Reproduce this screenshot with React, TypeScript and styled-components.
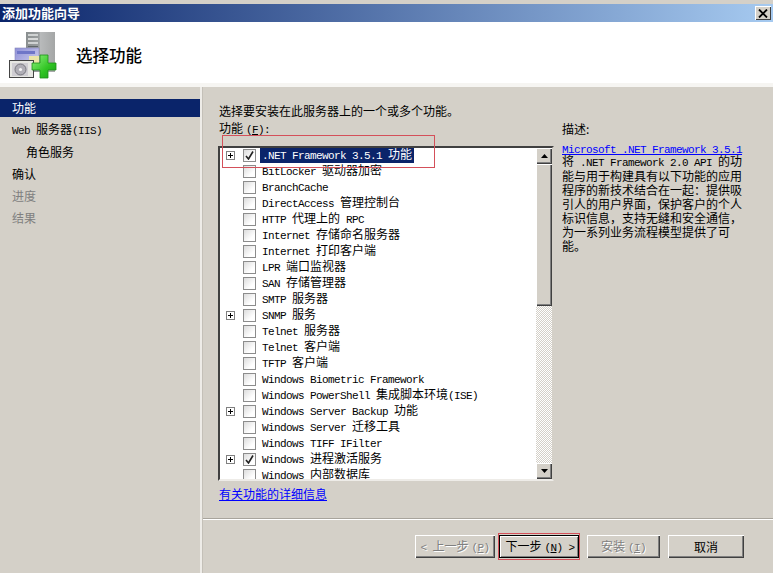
import React from "react";
import styled, { createGlobalStyle } from "styled-components";

const Global = createGlobalStyle`
  html, body { margin: 0; padding: 0; background: #d4d0c8; }
  * { box-sizing: border-box; }
`;

const Window = styled.div`
  width: 773px; height: 573px; overflow: hidden; position: relative;
  background: #d4d0c8; padding-top: 4px; display: flex; flex-direction: column;
  font-family: "Noto Sans CJK SC", "Liberation Sans", sans-serif; font-size: 12px; color: #000;
  line-height: 14px;
`;
const TitleBar = styled.div`
  height: 18px; flex: none; display: flex; align-items: center; justify-content: space-between;
  padding: 0 2px; background: linear-gradient(90deg, #0a246a, #a6caf0);
  color: #fff; font-weight: 700; font-size: 13px;
`;
const CloseBtn = styled.div`
  width: 16px; height: 14px; background: #d4d0c8; display: flex; align-items: center; justify-content: center;
  box-shadow: inset 1px 1px 0 #fff, inset -1px -1px 0 #404040;
`;
const Header = styled.div`
  height: 65px; flex: none; background: #fff; border-bottom: 4px solid #f6f5f2;
  display: flex; align-items: center; padding: 2px 0 0 9px; gap: 19px;
`;
const HeaderTitle = styled.div`
  font-size: 16.5px; font-weight: 500; line-height: 20px; padding-top: 3px;
`;
const Body = styled.div`
  flex: 1; display: flex; min-height: 0;
`;
const Sidebar = styled.div`
  width: 200px; flex: none; padding-top: 12px; display: flex; flex-direction: column;
`;
const NavItem = styled.div<{ $state?: "active" | "muted"; $indent?: boolean }>`
  height: ${(p) => (p.$state === "active" ? 18 : 22)}px;
  margin-bottom: ${(p) => (p.$state === "active" ? 2 : 0)}px;
  display: flex; align-items: center; white-space: pre;
  padding-left: ${(p) => (p.$indent ? 26 : 12)}px;
  background: ${(p) => (p.$state === "active" ? "#0a246a" : "transparent")};
  color: ${(p) => (p.$state === "active" ? "#fff" : p.$state === "muted" ? "#808080" : "#000")};
`;
const Splitter = styled.div`
  width: 3px; flex: none; background: #eeece8; border-right: 1px solid #c4c0b8;
`;
const Main = styled.div`
  flex: 1; display: flex; flex-direction: column; min-width: 0;
`;
const Content = styled.div`
  height: 432px; flex: none; display: flex; padding: 15px 0 0 15px; gap: 8px;
`;
const LeftCol = styled.div`
  width: 336px; flex: none; display: flex; flex-direction: column;
`;
const Label = styled.div`
  height: 18px; white-space: pre; display: flex; align-items: center; padding-left: 1px;
`;
const ListBox = styled.div`
  width: 336px; height: 335px; flex: none; display: flex; background: #fff; overflow: hidden; margin-top: 8px;
  border: 2px solid; border-color: #404040 #d4d0c8 #eeece8 #404040;
`;
const Rows = styled.div`
  flex: 1; overflow: hidden; margin-top: -1px;
`;
const Row = styled.div`
  height: 16px; display: flex; align-items: center; padding-left: 6px; white-space: pre;
`;
const Expander = styled.div<{ $show: boolean }>`
  width: 9px; height: 9px; flex: none; position: relative; visibility: ${(p) => (p.$show ? "visible" : "hidden")};
  border: 1px solid #808080; background: #fff; margin-right: 8px;
  &::before { content: ""; position: absolute; left: 1px; top: 3px; width: 5px; height: 1px; background: #000; }
  &::after { content: ""; position: absolute; left: 3px; top: 1px; width: 1px; height: 5px; background: #000; }
`;
const Check = styled.div`
  width: 13px; height: 13px; flex: none; border: 1px solid #8c8c8c; display: flex; align-items: center; justify-content: center;
  background: linear-gradient(135deg, #dcdcdc, #fff 70%); margin-right: 4px;
`;
const RowText = styled.div<{ $sel?: boolean }>`
  height: 16px; padding: 0 2px; display: flex; align-items: center;
  background: ${(p) => (p.$sel ? "#0a246a" : "transparent")};
  color: ${(p) => (p.$sel ? "#fff" : "#000")};
`;
const Scrollbar = styled.div`
  width: 16px; flex: none; display: flex; flex-direction: column;
  background: repeating-conic-gradient(#d4d0c8 0 25%, #fff 0 50%) 0 0 / 2px 2px;
`;
const ScrollBtn = styled.div`
  height: 16px; flex: none; background: #d4d0c8; display: flex; align-items: center; justify-content: center;
  box-shadow: inset 1px 1px 0 #fff, inset -1px -1px 0 #404040, inset -2px -2px 0 #808080;
`;
const Thumb = styled.div`
  height: 142px; flex: none; background: #d4d0c8;
  box-shadow: inset 1px 1px 0 #fff, inset -1px -1px 0 #404040, inset -2px -2px 0 #808080;
`;
const Spacer = styled.div`
  flex: 1;
`;
const InfoLink = styled.a`
  margin-top: 6px; padding-left: 1px; color: #0000ff; text-decoration: underline; line-height: 14px; white-space: pre; width: fit-content;
`;
const Desc = styled.div`
  width: 190px; flex: none; padding-top: 18px; display: flex; flex-direction: column;
`;
const DescLabel = styled.div`
  height: 18px; white-space: pre; display: flex; align-items: center;
`;
const DescLink = styled.a`
  margin-top: 3px; height: 14px; line-height: 14px; color: #0000ff; text-decoration: underline; white-space: pre; width: fit-content;
`;
const DescLine = styled.div`
  height: 14px; display: flex; align-items: center; white-space: pre;
`;
const Footer = styled.div`
  flex: 1; border-top: 1px solid #fff; box-shadow: 0 -1px 0 #a8a49c;
  display: flex; align-items: flex-start; padding: 15px 0 0 212px;
`;
const Btn = styled.div<{ $w: number; $disabled?: boolean; $default?: boolean; $gap?: number }>`
  width: ${(p) => p.$w}px; height: 23px; flex: none; background: #d4d0c8; display: flex; align-items: center; justify-content: center;
  white-space: pre; margin-right: ${(p) => p.$gap ?? 0}px; padding-left: ${(p) => (p.$default ? 2 : 0)}px;
  color: ${(p) => (p.$disabled ? "#808080" : "#000")};
  text-shadow: ${(p) => (p.$disabled ? "1px 1px 0 #fff" : "none")};
  box-shadow: ${(p) =>
    p.$default
      ? "inset 0 0 0 1px #000, inset 2px 2px 0 #fff, inset -2px -2px 0 #808080"
      : "inset 1px 1px 0 #fff, inset -1px -1px 0 #404040, inset -2px -2px 0 #808080"};
`;
const Lat = styled.span`
  font-family: "Liberation Mono", monospace; font-size: 11px; letter-spacing: -0.6px;
`;
const MnemonicWrap = styled.span`
  margin-left: 3px;
`;
const Under = styled.span`
  text-decoration: underline;
`;
const Annotation = styled.div<{ $x: number; $y: number; $w: number; $h: number }>`
  position: absolute; left: ${(p) => p.$x}px; top: ${(p) => p.$y}px; width: ${(p) => p.$w}px; height: ${(p) => p.$h}px;
  border: 1px solid #d4505a; pointer-events: none;
`;

// Splits a string into Latin (6px per char) and CJK (12px) runs, as the bitmap UI font does.
const T = ({ s }: { s: string }) => (
  <span>
    {s.split(/([\x20-\x7e]+)/).filter(Boolean).map((r, i) =>
      /^[\x20-\x7e]/.test(r) ? <Lat key={i}>{r}</Lat> : <span key={i}>{r}</span>
    )}
  </span>
);

const Mnemonic = ({ k }: { k: string }) => (
  <MnemonicWrap>
    <Lat>(<Under>{k}</Under>)</Lat>
  </MnemonicWrap>
);

const items: { t: string; plus?: boolean; checked?: boolean; sel?: boolean }[] = [
  { t: ".NET Framework 3.5.1 功能", plus: true, checked: true, sel: true },
  { t: "BitLocker 驱动器加密" },
  { t: "BranchCache" },
  { t: "DirectAccess 管理控制台" },
  { t: "HTTP 代理上的 RPC" },
  { t: "Internet 存储命名服务器" },
  { t: "Internet 打印客户端" },
  { t: "LPR 端口监视器" },
  { t: "SAN 存储管理器" },
  { t: "SMTP 服务器" },
  { t: "SNMP 服务", plus: true },
  { t: "Telnet 服务器" },
  { t: "Telnet 客户端" },
  { t: "TFTP 客户端" },
  { t: "Windows Biometric Framework" },
  { t: "Windows PowerShell 集成脚本环境(ISE)" },
  { t: "Windows Server Backup 功能", plus: true },
  { t: "Windows Server 迁移工具" },
  { t: "Windows TIFF IFilter" },
  { t: "Windows 进程激活服务", plus: true, checked: true },
  { t: "Windows 内部数据库" },
];

const descLines = [
  "将 .NET Framework 2.0 API 的功",
  "能与用于构建具有以下功能的应用",
  "程序的新技术结合在一起：提供吸",
  "引人的用户界面，保护客户的个人",
  "标识信息，支持无缝和安全通信，",
  "为一系列业务流程模型提供了可",
  "能。",
];

const WizardIcon = () => (
  <svg width="48" height="50" viewBox="0 0 48 50" style={{ flex: "none" }}>
    <defs>
      <linearGradient id="srv" x1="0" x2="1" y1="0" y2="0">
        <stop offset="0" stopColor="#8a8f90" />
        <stop offset="0.45" stopColor="#9a9e9f" />
        <stop offset="0.5" stopColor="#b8babb" />
        <stop offset="1" stopColor="#a4a6a6" />
      </linearGradient>
      <linearGradient id="plus" x1="0" x2="1" y1="0" y2="1">
        <stop offset="0" stopColor="#8ef07c" />
        <stop offset="0.6" stopColor="#2fc422" />
        <stop offset="1" stopColor="#1a9a1c" />
      </linearGradient>
      <linearGradient id="win" x1="0" x2="1" y1="0" y2="1">
        <stop offset="0" stopColor="#8f90d8" />
        <stop offset="1" stopColor="#d8d8f0" />
      </linearGradient>
    </defs>
    <rect x="17" y="3" width="29" height="40" fill="url(#srv)" />
    <rect x="19" y="5" width="10" height="2" fill="#cfd2d2" />
    <rect x="19" y="9" width="10" height="2" fill="#d6d8d8" />
    <rect x="19" y="13" width="10" height="2" fill="#cfd2d2" />
    <rect x="19" y="17" width="10" height="1" fill="#5f6668" />
    <rect x="6" y="19" width="24" height="22" fill="url(#win)" stroke="#8686b8" strokeWidth="0.6" />
    <rect x="8" y="22" width="18" height="3" fill="#6f76c8" />
    <rect x="20" y="27" width="10" height="14" fill="#ece6a8" />
    <rect x="0.5" y="31.5" width="24" height="17" fill="#e6e6e2" stroke="#444" />
    <rect x="3" y="34" width="16" height="13" fill="#cfcdd2" />
    <circle cx="11.5" cy="40.5" r="5.5" fill="#b0aeb6" stroke="#77777e" />
    <circle cx="11.5" cy="40.5" r="1.6" fill="#f4f4f4" />
    <path d="M31 26h8v8h8v7h-8v8h-8v-8h-8v-7h8z" fill="url(#plus)" stroke="#1c8f18" strokeWidth="0.8" />
  </svg>
);

export default function App() {
  return (
    <Window>
      <Global />
      <TitleBar>
        <span>添加功能向导</span>
        <CloseBtn>
          <svg width="10" height="9" viewBox="0 0 10 9">
            <path d="M1 0.5l8 8M9 0.5l-8 8" stroke="#000" strokeWidth="1.8" />
          </svg>
        </CloseBtn>
      </TitleBar>
      <Header>
        <WizardIcon />
        <HeaderTitle>选择功能</HeaderTitle>
      </Header>
      <Body>
        <Sidebar>
          <NavItem $state="active">功能</NavItem>
          <NavItem><T s="Web 服务器(IIS)" /></NavItem>
          <NavItem $indent>角色服务</NavItem>
          <NavItem>确认</NavItem>
          <NavItem $state="muted">进度</NavItem>
          <NavItem $state="muted">结果</NavItem>
        </Sidebar>
        <Splitter />
        <Main>
          <Content>
            <LeftCol>
              <Label>选择要安装在此服务器上的一个或多个功能。</Label>
              <Label><span>功能<Mnemonic k="F" /><Lat>:</Lat></span></Label>
              <ListBox>
                <Rows>
                  {items.map((it) => (
                    <Row key={it.t}>
                      <Expander $show={!!it.plus} />
                      <Check>
                        {it.checked && (
                          <svg width="9" height="9" viewBox="0 0 9 9">
                            <path d="M1 5l2.5 3L8 0.5" fill="none" stroke="#222" strokeWidth="1.6" />
                          </svg>
                        )}
                      </Check>
                      <RowText $sel={it.sel}><T s={it.t} /></RowText>
                    </Row>
                  ))}
                </Rows>
                <Scrollbar>
                  <ScrollBtn>
                    <svg width="7" height="4" viewBox="0 0 7 4"><path d="M3.5 0L7 4H0z" fill="#000" /></svg>
                  </ScrollBtn>
                  <Thumb />
                  <Spacer />
                  <ScrollBtn>
                    <svg width="7" height="4" viewBox="0 0 7 4"><path d="M0 0h7L3.5 4z" fill="#000" /></svg>
                  </ScrollBtn>
                </Scrollbar>
              </ListBox>
              <InfoLink href="#">有关功能的详细信息</InfoLink>
            </LeftCol>
            <Desc>
              <DescLabel>描述:</DescLabel>
              <DescLink href="#"><T s="Microsoft .NET Framework 3.5.1" /></DescLink>
              {descLines.map((l) => (
                <DescLine key={l}><T s={l} /></DescLine>
              ))}
            </Desc>
          </Content>
          <Footer>
            <Btn $w={80} $disabled $gap={4}><span><Lat>{"< "}</Lat>上一步<Mnemonic k="P" /></span></Btn>
            <Btn $w={80} $default $gap={8}><span>下一步<Mnemonic k="N" /><Lat>{" >"}</Lat></span></Btn>
            <Btn $w={73} $disabled $gap={8}><span>安装<Mnemonic k="I" /></span></Btn>
            <Btn $w={76}>取消</Btn>
          </Footer>
        </Main>
      </Body>
      <Annotation $x={222} $y={135} $w={213} $h={33} />
      <Annotation $x={498} $y={533} $w={82} $h={27} />
    </Window>
  );
}
